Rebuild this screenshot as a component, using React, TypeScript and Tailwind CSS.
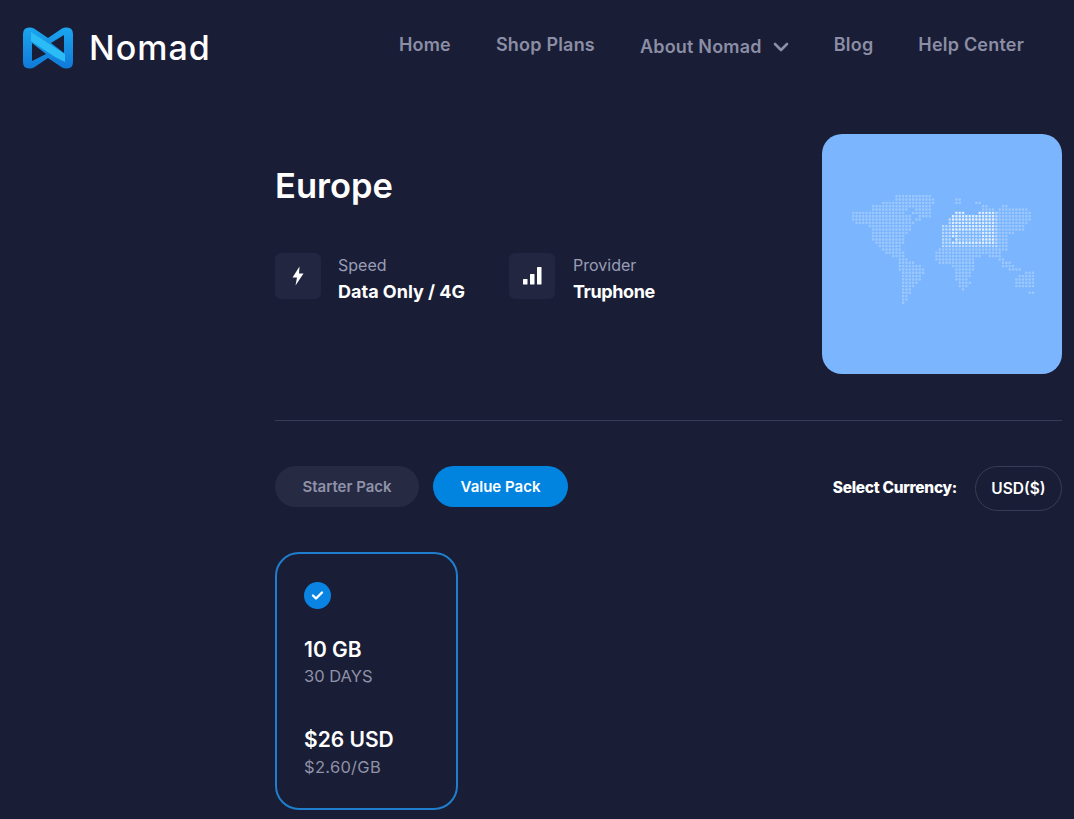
import React from "react";

const F = "[font-family:Inter,'Liberation_Sans',sans-serif]";

const ROWS: [number, number][][] = [
  [[16, 27]],
  [[16, 28], [34, 36]],
  [[12, 28], [34, 36], [40, 42]],
  [[9, 27], [42, 44], [48, 50]],
  [[9, 20], [22, 27], [42, 46], [47, 56]],
  [[3, 19], [21, 27], [34, 37], [41, 57]],
  [[3, 21], [23, 27], [33, 57]],
  [[3, 21], [22, 24], [32, 57]],
  [[4, 22], [32, 56]],
  [[8, 21], [30, 55]],
  [[9, 21], [30, 55]],
  [[9, 20], [30, 52]],
  [[9, 19], [30, 50]],
  [[9, 19], [30, 33], [34, 50]],
  [[10, 19], [30, 50]],
  [[11, 18], [30, 50]],
  [[12, 18], [29, 50]],
  [[13, 19], [28, 48]],
  [[15, 19], [28, 42], [44, 48]],
  [[17, 20], [28, 40], [47, 49]],
  [[17, 22], [29, 40], [48, 51]],
  [[17, 24], [33, 40], [48, 52]],
  [[17, 25], [34, 40], [50, 54]],
  [[18, 25], [34, 39], [55, 58]],
  [[18, 24], [34, 39], [53, 58]],
  [[18, 24], [34, 38], [52, 58]],
  [[18, 23], [35, 39], [52, 58]],
  [[18, 22], [35, 38], [52, 58]],
  [[18, 21], [36, 37]],
  [[18, 21], [56, 58]],
  [[18, 20]],
  [[18, 20]],
  [[18, 19]],
];

function dotOpacity(c: number, r: number) {
  const bright = c >= 33 && c < 46 && r >= 5 && r <= 14 && !(r >= 11 && r <= 13 && c >= 35 && c <= 41);
  if (bright) return 0.8;
  if (c >= 30 && c < 47 && r >= 5 && r <= 15) return 0.5;
  return 0.27;
}

function WorldMap() {
  const dots: React.ReactNode[] = [];
  ROWS.forEach((spans, r) =>
    spans.forEach(([a, b]) => {
      for (let c = a; c < b; c++) {
        dots.push(
          <rect key={`${r}-${c}`} x={c * 3.33} y={r * 3.33} width={2.4} height={2.4} rx={0.8} fill="#fff" opacity={dotOpacity(c, r)} />
        );
      }
    })
  );
  return (
    <svg width="200" height="120" viewBox="0 0 200 120">
      {dots}
    </svg>
  );
}

function Logo() {
  return (
    <svg width="50" height="42" viewBox="0 0 50 42" fill="none">
      <defs>
        <linearGradient id="lg1" x1="0" y1="0" x2="0" y2="1">
          <stop offset="0" stopColor="#1ba6ee" />
          <stop offset="1" stopColor="#1079d8" />
        </linearGradient>
      </defs>
      <path
        d="M0 7 Q0 0 7 0.5 Q9 0.7 11 1.6 L25 11 L39 1.6 Q41 0.7 43 0.5 Q50 0 50 7 V35 Q50 42 43 41.5 Q41 41.3 39 40.4 L25 31 L11 40.4 Q9 41.3 7 41.5 Q0 42 0 35 Z"
        fill="url(#lg1)"
      />
      <path d="M8 5 L42 27 V35 L32 30 L8 14 Z" fill="#2cbcf5" />
      <path d="M9 16 L23 27 L9 34 Z" fill="#191d35" />
      <path d="M41 8 V26 L28 16 Z" fill="#191d35" />
    </svg>
  );
}

function IconBox({ children }: { children: React.ReactNode }) {
  return <div className="flex h-[46px] w-[46px] items-center justify-center rounded-md bg-[#222640]">{children}</div>;
}

function Info({ label, value, icon, cls, gap, valueCls }: { label: string; value: string; icon: React.ReactNode; cls: string; gap: string; valueCls: string }) {
  return (
    <div className={`flex items-start ${cls}`}>
      <IconBox>{icon}</IconBox>
      <div className={`mt-[2px] flex flex-col ${gap}`}>
        <span className="text-[16px] leading-5 font-normal text-[#9a9db5]">{label}</span>
        <span className={`mt-[7px] text-[18px] leading-5 font-bold text-white ${valueCls}`}>{value}</span>
      </div>
    </div>
  );
}

export default function App() {
  return (
    <div className={`min-h-screen bg-[#191d35] ${F}`}>
      <header className="flex items-start pr-[50px] pl-[23px]">
        <div className="mt-[27px] flex items-center">
          <Logo />
          <span className="ml-[16px] text-[34px] leading-[42px] font-medium tracking-[1px] text-white">Nomad</span>
        </div>
        <nav className="ml-auto flex gap-[45px] pt-[34px] text-[18px] leading-[22px] font-semibold tracking-[0.2px] text-[#8b8ea5]">
          <a>Home</a>
          <a>Shop Plans</a>
          <a className="flex items-center pt-[2px]">
            About Nomad
            <svg className="ml-[11px]" width="16" height="10" viewBox="0 0 16 10" fill="none">
              <path d="M2 2 L8 8 L14 2" stroke="#8b8ea5" strokeWidth="2.6" strokeLinecap="round" strokeLinejoin="round" />
            </svg>
          </a>
          <a>Blog</a>
          <a>Help Center</a>
        </nav>
      </header>

      <main className="pt-[65px] pr-[12px] pl-[275px]">
        <section className="flex items-start justify-between">
          <div>
            <h1 className="mt-[31px] text-[34.5px] leading-[42px] font-semibold text-white">Europe</h1>
            <div className="mt-[46px] flex">
              <Info
                label="Speed"
                value="Data Only / 4G"
                cls="w-[234px]"
                gap="ml-[17px]"
                valueCls=""
                icon={
                  <svg width="14" height="20" viewBox="0 0 14 20" fill="#fff">
                    <path d="M8.5 0.5 L1.5 11.5 H6 L4.5 19.5 L12.5 7.5 H8 Z" />
                  </svg>
                }
              />
              <Info
                label="Provider"
                value="Truphone"
                cls=""
                gap="ml-[18px]"
                valueCls="tracking-[-0.4px]"
                icon={
                  <svg width="20" height="20" viewBox="0 0 20 20" fill="#fff">
                    <rect x="1" y="13" width="4.5" height="5.5" rx="0.5" />
                    <rect x="8" y="8" width="4.5" height="10.5" rx="0.5" />
                    <rect x="15" y="1" width="4.5" height="17.5" rx="0.5" />
                  </svg>
                }
              />
            </div>
          </div>
          <div className="flex h-[240px] w-[240px] justify-center rounded-[20px] bg-[#7ab5fe] pt-[61px]">
            <WorldMap />
          </div>
        </section>

        <hr className="mt-[46px] border-t border-[#383c56]" />

        <section className="mt-[45px] flex items-start">
          <button className="h-[41px] w-[144px] rounded-full bg-[#262a43] pt-[2px] text-[15px] font-semibold text-[#8f92a8]">Starter Pack</button>
          <button className="ml-[14px] h-[41px] w-[135px] rounded-full bg-[#0084e0] pt-[2px] text-[15px] font-semibold text-white">Value Pack</button>
          <span className="mt-[12px] ml-auto text-[15.5px] leading-5 font-extrabold tracking-[-0.3px] text-white">Select Currency:</span>
          <button className="ml-[18px] h-[45px] w-[87px] rounded-full border border-[#383c56] text-[15.5px] font-semibold text-white">USD($)</button>
        </section>

        <section className="mt-[41px] flex h-[258px] w-[183px] flex-col rounded-[24px] border-2 border-[#1f7fce] pt-[28px] pl-[27px]">
          <div className="flex h-[27px] w-[27px] items-center justify-center rounded-full bg-[#0a84e3]">
            <svg width="13" height="11" viewBox="0 0 13 11" fill="none">
              <path d="M2 5.5 L5 8.5 L11 2.5" stroke="#fff" strokeWidth="2.4" strokeLinecap="round" strokeLinejoin="round" />
            </svg>
          </div>
          <div className="mt-[28px] text-[21px] leading-[26px] font-semibold text-white">10 GB</div>
          <div className="text-[16.5px] leading-[26px] font-normal text-[#8f92a8]">30 DAYS</div>
          <div className="mt-[38px] text-[21px] leading-[26px] font-semibold text-white">$26 USD</div>
          <div className="mt-[1px] text-[16.5px] leading-[26px] font-normal tracking-[0.3px] text-[#8f92a8]">$2.60/GB</div>
        </section>
      </main>
    </div>
  );
}
